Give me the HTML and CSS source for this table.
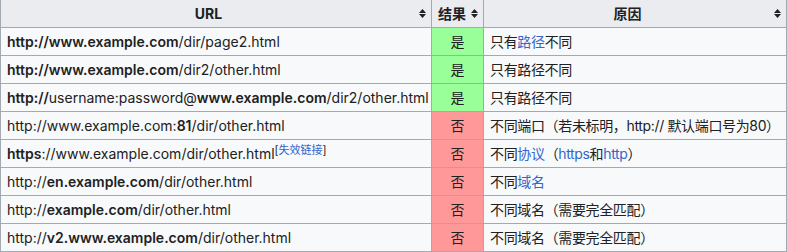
FILE: index.html
```html
<!DOCTYPE html>
<html lang="zh">
<head>
<meta charset="utf-8">
<link rel="stylesheet" href="styles.css">
</head>
<body>
<table class="wikitable">
  <colgroup>
    <col class="c-url">
    <col class="c-res">
    <col class="c-why">
  </colgroup>
  <thead>
    <tr>
      <th class="sortable">URL</th>
      <th class="sortable">结果</th>
      <th class="sortable">原因</th>
    </tr>
  </thead>
  <tbody>
    <tr>
      <td><b>http://www.example.com</b>/dir/page2.html</td>
      <td class="yes">是</td>
      <td class="why">只有<a href="#">路径</a>不同</td>
    </tr>
    <tr>
      <td><b>http://www.example.com</b>/dir2/other.html</td>
      <td class="yes">是</td>
      <td class="why">只有路径不同</td>
    </tr>
    <tr>
      <td><b>http://</b>username:password@<b>www.example.com</b>/dir2/other.html</td>
      <td class="yes">是</td>
      <td class="why">只有路径不同</td>
    </tr>
    <tr>
      <td>http://www.example.com:<b>81</b>/dir/other.html</td>
      <td class="no">否</td>
      <td class="why">不同端口（若未标明，http:// 默认端口号为80）</td>
    </tr>
    <tr>
      <td><b>https</b>://www.example.com/dir/other.html<sup class="note">[<a href="#">失效链接</a>]</sup></td>
      <td class="no">否</td>
      <td class="why">不同<a href="#">协议</a>（<a href="#">https</a>和<a href="#">http</a>）</td>
    </tr>
    <tr>
      <td>http://<b>en.example.com</b>/dir/other.html</td>
      <td class="no">否</td>
      <td class="why">不同<a href="#">域名</a></td>
    </tr>
    <tr>
      <td>http://<b>example.com</b>/dir/other.html</td>
      <td class="no">否</td>
      <td class="why">不同域名（需要完全匹配）</td>
    </tr>
    <tr>
      <td>http://<b>v2.www.example.com</b>/dir/other.html</td>
      <td class="no">否</td>
      <td class="why">不同域名（需要完全匹配）</td>
    </tr>
  </tbody>
</table>
</body>
</html>
```

FILE: styles.css
```css
html, body {
  margin: 0;
  padding: 0;
  background: #ffffff;
}

body {
  font-family: "Inter", "Noto Sans CJK SC", sans-serif;
  font-size: 14px;
  color: #202122;
}

.wikitable {
  width: 786px;
  table-layout: fixed;
  border-collapse: collapse;
  background: #f8f9fa;
  color: #202122;
  border: 1px solid #a2a9b1;
  margin-top: -1px;
}

.c-url { width: 431px; }
.c-res { width: 52px; }
.c-why { width: 303px; }

.wikitable th,
.wikitable td {
  border: 1px solid #a2a9b1;
  padding: 0 6px;
  height: 27px;
  line-height: 22px;
  white-space: nowrap;
  overflow: visible;
}

.wikitable th {
  background-color: #eaecf0;
  text-align: center;
  font-weight: bold;
}

.wikitable th.sortable {
  padding-right: 21px;
  background-image: url("data:image/svg+xml,%3Csvg xmlns='http://www.w3.org/2000/svg' width='7' height='9' viewBox='0 0 7 9'%3E%3Cpath d='M3.5 0L7 4H0z M3.5 9L0 5h7z' fill='%23202122'/%3E%3C/svg%3E");
  background-repeat: no-repeat;
  background-position: right 5px center;
}

.wikitable td.why {
  letter-spacing: -0.35px;
}

.wikitable td.yes {
  background: #9f9;
  text-align: center;
}

.wikitable td.no {
  background: #f99;
  text-align: center;
}

a {
  color: #3366cc;
  text-decoration: none;
}

b {
  font-weight: 600;
}

.note {
  font-size: 11px;
  line-height: 1;
  vertical-align: 5px;
}
```
